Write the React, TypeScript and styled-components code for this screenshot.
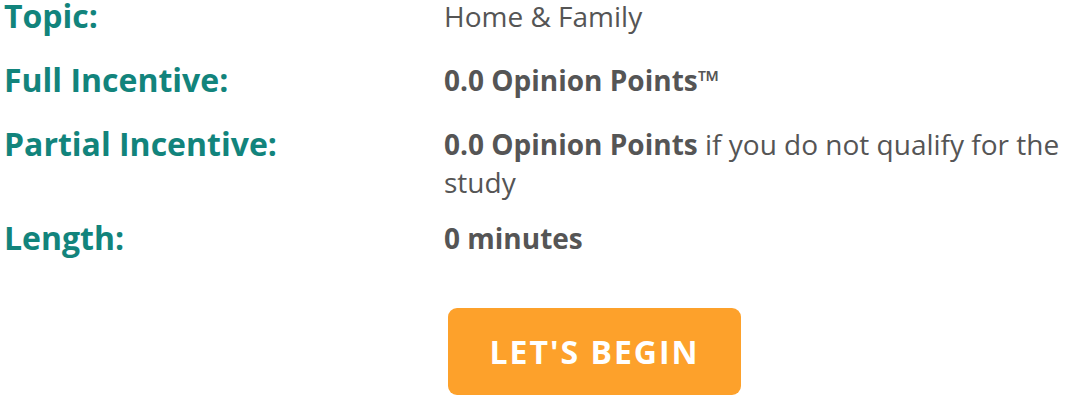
import React from 'react'
import styled, { createGlobalStyle } from 'styled-components'

const GlobalStyle = createGlobalStyle`
  body {
    margin: 0;
    background: #ffffff;
    font-family: 'Open Sans', 'Liberation Sans', sans-serif;
  }
`

const Details = styled.div`
  display: grid;
  grid-template-columns: 440px 1fr;
  row-gap: 18px;
  margin-top: -3px;
  padding: 0 0 0 4px;
`

const Label = styled.div`
  font-weight: 700;
  font-size: 32px;
  line-height: 38px;
  padding-bottom: 8px;
  color: #12847c;
`

const Value = styled.div`
  font-size: 28px;
  line-height: 38px;
  color: #555555;

  strong {
    font-weight: 700;
  }
`

const Actions = styled.div`
  grid-column: 2;
  padding: 25px 0 0 4px;
`

const BeginButton = styled.button`
  width: 293px;
  height: 87px;
  border: none;
  border-radius: 9px;
  background: #fda12b;
  color: #ffffff;
  font-family: 'Open Sans', 'Liberation Sans', sans-serif;
  font-weight: 700;
  font-size: 32px;
  letter-spacing: 2px;
  cursor: pointer;
`

const rows: { label: string; value: React.ReactNode }[] = [
  { label: 'Topic:', value: 'Home & Family' },
  { label: 'Full Incentive:', value: <strong>0.0 Opinion Points™</strong> },
  {
    label: 'Partial Incentive:',
    value: (
      <>
        <strong>0.0 Opinion Points</strong> if you do not qualify for the study
      </>
    ),
  },
  { label: 'Length:', value: <strong>0 minutes</strong> },
]

export default function App() {
  return (
    <>
      <GlobalStyle />
      <Details>
        {rows.map((row) => (
          <React.Fragment key={row.label}>
            <Label>{row.label}</Label>
            <Value>{row.value}</Value>
          </React.Fragment>
        ))}
        <Actions>
          <BeginButton>LET'S BEGIN</BeginButton>
        </Actions>
      </Details>
    </>
  )
}
